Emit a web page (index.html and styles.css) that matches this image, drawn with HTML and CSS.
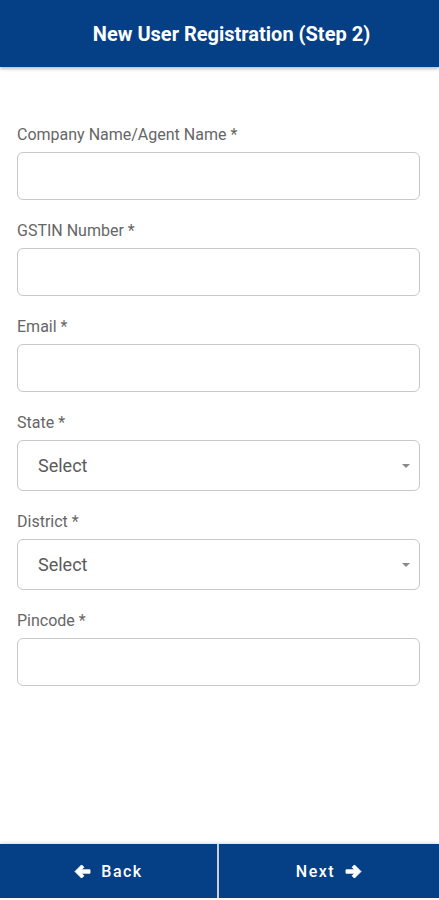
FILE: index.html
```html
<!DOCTYPE html>
<html lang="en">

<head>
    <meta charset="UTF-8">
    <meta name="viewport" content="width=device-width, initial-scale=1.0">
    <title>New User Registration</title>
    <link rel="stylesheet" href="styles.css">
</head>

<body>
    <div class="page">
        <div class="header">
            <h2>New User Registration (Step 2)</h2>
        </div>

        <div class="form">
            <div class="field">
                <label>Company Name/Agent Name *</label>
                <input type="text">
            </div>
            <div class="field">
                <label>GSTIN Number *</label>
                <input type="text">
            </div>
            <div class="field">
                <label>Email *</label>
                <input type="text">
            </div>
            <div class="field">
                <label>State *</label>
                <div class="select">
                    <span>Select</span>
                    <span class="caret"></span>
                </div>
            </div>
            <div class="field">
                <label>District *</label>
                <div class="select">
                    <span>Select</span>
                    <span class="caret"></span>
                </div>
            </div>
            <div class="field">
                <label>Pincode *</label>
                <input type="text">
            </div>
        </div>

        <div class="footer">
            <button class="nav-btn back-btn">
                <svg width="17" height="15" viewBox="0 0 18 16">
                    <path d="M8 1 L1 8 L8 15 L10.5 12.5 L7.5 9.8 H17 V6.2 H7.5 L10.5 3.5 Z" fill="#fff" stroke="#fff" stroke-width="1" stroke-linejoin="round"/>
                </svg>
                Back
            </button>
            <button class="nav-btn next-btn">
                Next
                <svg width="17" height="15" viewBox="0 0 18 16">
                    <path d="M10 1 L17 8 L10 15 L7.5 12.5 L10.5 9.8 H1 V6.2 H10.5 L7.5 3.5 Z" fill="#fff" stroke="#fff" stroke-width="1" stroke-linejoin="round"/>
                </svg>
            </button>
        </div>
    </div>
</body>

</html>
```

FILE: styles.css
```css
* {
    box-sizing: border-box;
}

body {
    margin: 0;
    font-family: Roboto, "Liberation Sans", Arial, sans-serif;
    background: #fff;
}

.page {
    height: 900px;
    display: flex;
    flex-direction: column;
}

.header {
    height: 67px;
    background-color: #053f86;
    display: flex;
    align-items: center;
    justify-content: center;
    padding-left: 24px;
    box-shadow: 0 2px 3px rgba(0, 0, 0, 0.25);
}

.header h2 {
    margin: 0;
    color: #fff;
    font-size: 20px;
    font-weight: 700;
}

.form {
    flex: 1;
    padding: 59px 19px 0 17px;
}

.field {
    margin-bottom: 22px;
}

.field label {
    display: block;
    height: 18px;
    line-height: 18px;
    font-size: 16px;
    color: #666;
    margin-bottom: 8px;
}

.field input {
    display: block;
    width: 100%;
    height: 48px;
    border: 1px solid #c8c8c8;
    border-radius: 6px;
    outline: none;
    font-size: 18px;
    padding: 0 20px;
}

.select {
    height: 51px;
    border: 1px solid #c8c8c8;
    border-radius: 6px;
    display: flex;
    align-items: center;
    justify-content: space-between;
    padding: 0 9px 0 20px;
    font-size: 18px;
    color: #5a5a5a;
}

.caret {
    width: 0;
    height: 0;
    margin-top: 1px;
    border-left: 4px solid transparent;
    border-right: 4px solid transparent;
    border-top: 4px solid #8a8a8a;
}

.footer {
    height: 54px;
    margin-bottom: 2px;
    display: flex;
    background-color: #053f86;
    box-shadow: 0 -1px 3px rgba(0, 0, 0, 0.15);
}

button {
    border: none;
    cursor: pointer;
    font-family: inherit;
}

.nav-btn {
    background-color: #053f86;
    color: #fff;
    font-size: 16px;
    font-weight: 500;
    letter-spacing: 1.5px;
    display: flex;
    align-items: center;
    justify-content: center;
    gap: 10px;
}

.back-btn {
    width: 219px;
    border-right: 2px solid #c9cdd3;
}

.next-btn {
    flex: 1;
}
```
